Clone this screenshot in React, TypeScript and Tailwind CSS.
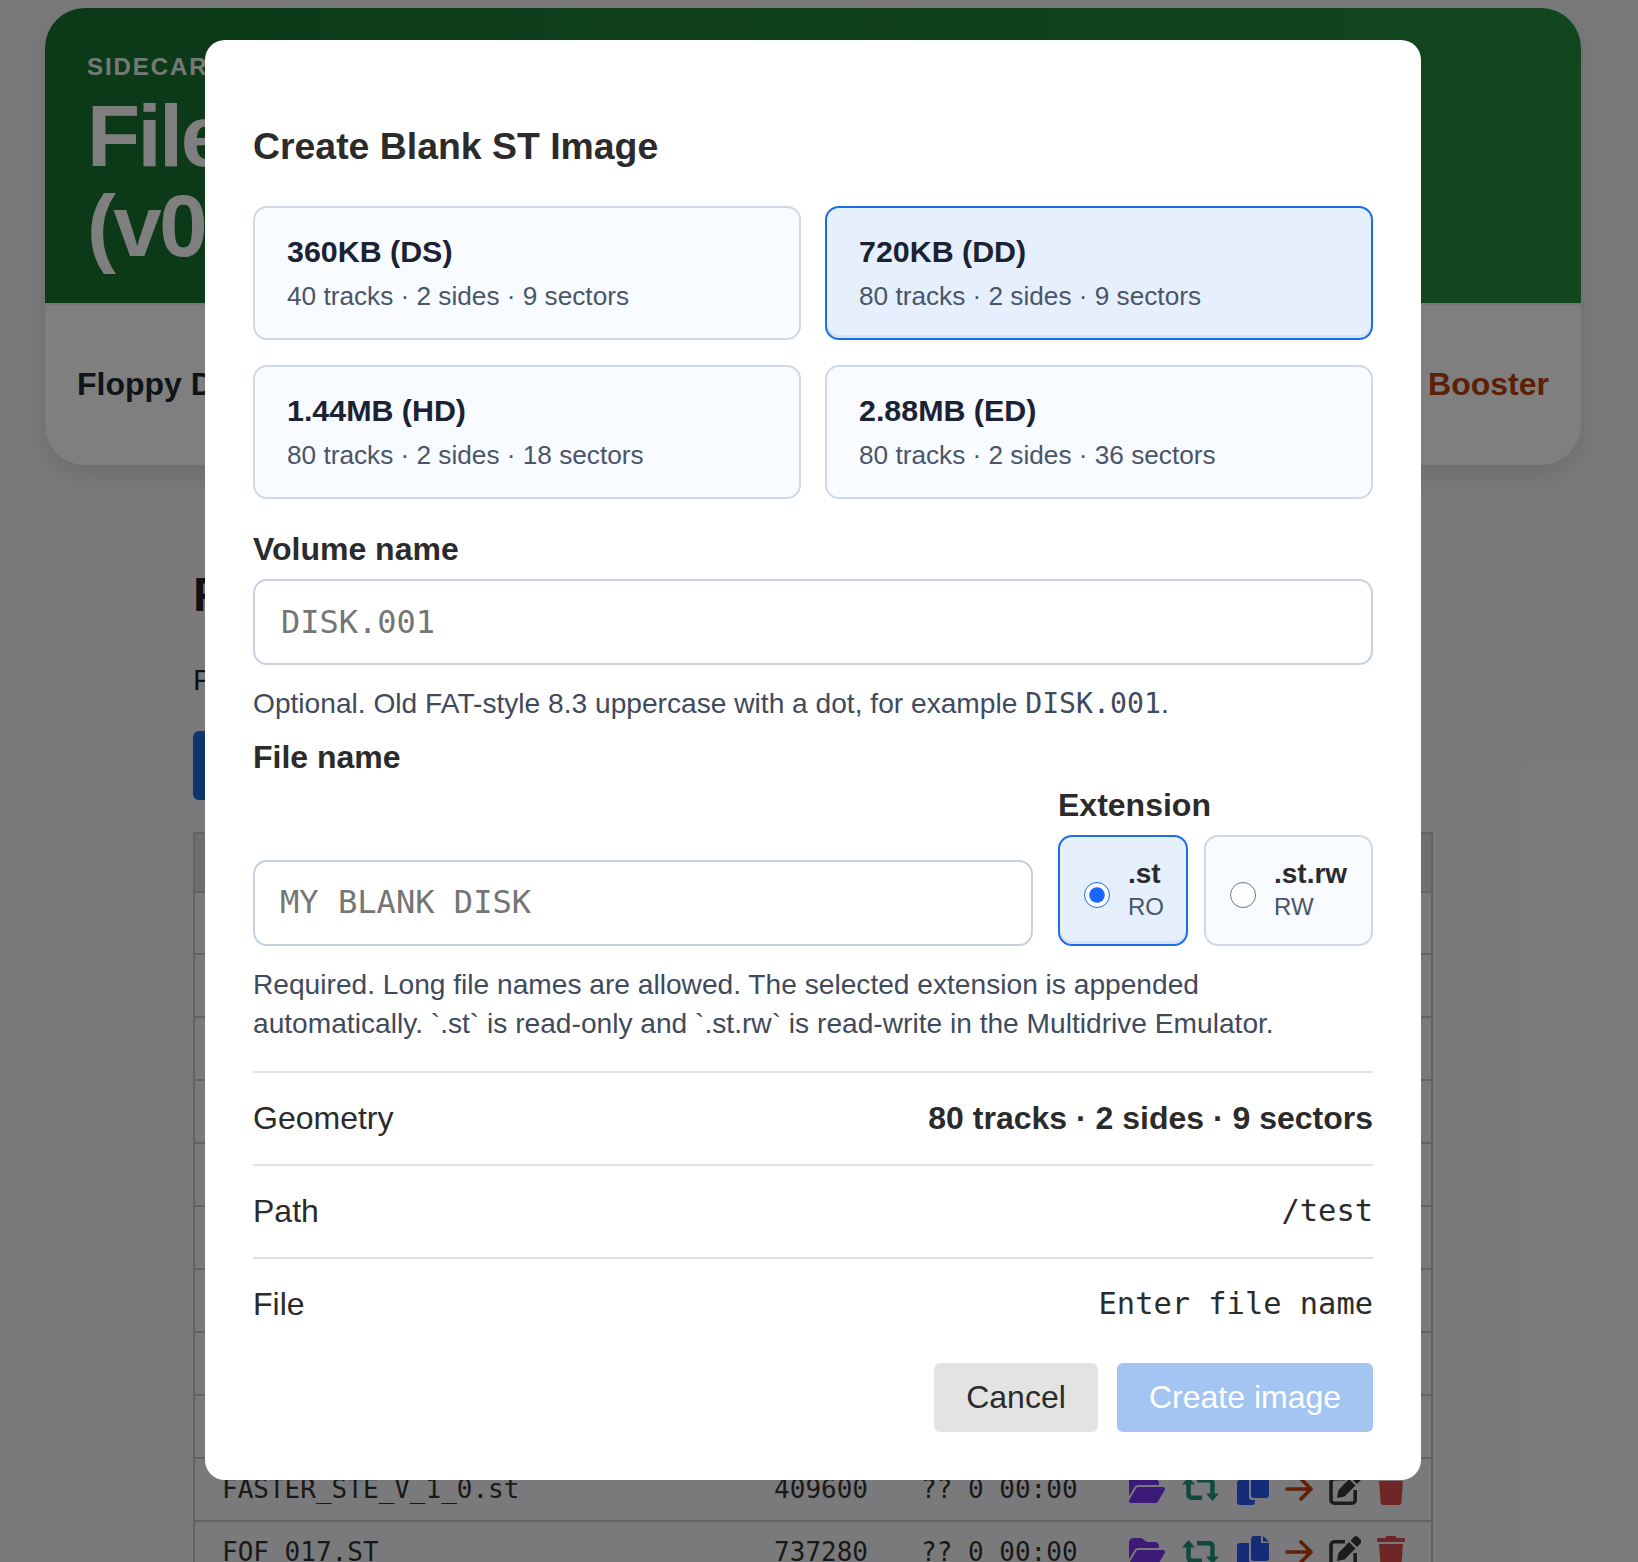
import React from 'react';
import { FaFolderOpen } from 'react-icons/fa6';

const SANS = "font-['Liberation_Sans',Arial,sans-serif]";
const MONO = "font-['DejaVu_Sans_Mono',monospace]";

const FORMATS = [
  { id: '360', title: '360KB (DS)', detail: '40 tracks · 2 sides · 9 sectors', selected: false },
  { id: '720', title: '720KB (DD)', detail: '80 tracks · 2 sides · 9 sectors', selected: true },
  { id: '144', title: '1.44MB (HD)', detail: '80 tracks · 2 sides · 18 sectors', selected: false },
  { id: '288', title: '2.88MB (ED)', detail: '80 tracks · 2 sides · 36 sectors', selected: false },
];

const FILES = [
  { name: '', size: '', date: '' },
  { name: '', size: '', date: '' },
  { name: '', size: '', date: '' },
  { name: '', size: '', date: '' },
  { name: '', size: '', date: '' },
  { name: '', size: '', date: '' },
  { name: '', size: '', date: '' },
  { name: '', size: '', date: '' },
  { name: '', size: '', date: '' },
  { name: 'FASTER_STE_V_1_0.st', size: '409600', date: '?? 0 00:00' },
  { name: 'FOF_017.ST', size: '737280', date: '?? 0 00:00' },
];

const RetweetIcon = () => (
  <svg viewBox="0 0 37 24" className="ml-[17px] h-[24px] w-[37px] text-[#1e947a]" fill="currentColor">
    <path d="M0 7.5 6.5 0 13 7.5H8.8V17a1.5 1.5 0 0 0 1.5 1.5H20V23H9a4.700 4.700 0 0 1-4.700-4.700V7.500Z" />
    <path d="M37 16.500 30.500 24 24 16.500h4.200V7a1.500 1.500 0 0 0-1.500-1.500H15V1h13a4.700 4.700 0 0 1 4.700 4.700v10.800Z" />
  </svg>
);

const CopyIcon = () => (
  <svg viewBox="0 0 32 32" className="ml-[18px] h-[32px] w-[32px] text-[#2a58f0]" fill="currentColor">
    <path d="M3 7h9v17a3 3 0 0 0 3 3h3v2a3 3 0 0 1-3 3H3a3 3 0 0 1-3-3V10a3 3 0 0 1 3-3Z" />
    <path d="M17 0h7v7h8v15a3 3 0 0 1-3 3H17a3 3 0 0 1-3-3V3a3 3 0 0 1 3-3Z" />
    <path d="M26 0l6 5.500h-6Z" />
  </svg>
);

const ArrowIcon = () => (
  <svg viewBox="0 0 28 24" className="ml-[16px] h-[24px] w-[28px] text-[#c2410c]" fill="none" stroke="currentColor" strokeWidth="3.6" strokeLinecap="round" strokeLinejoin="round">
    <path d="M2 12h24M16 2l10 10-10 10" />
  </svg>
);

const EditIcon = () => (
  <svg viewBox="0 0 32 32" className="ml-[16px] h-[32px] w-[32px] text-[#383838]" fill="currentColor">
    <path d="M16 5.800H5.500a3.500 3.500 0 0 0-3.500 3.500V27a3.200 3.200 0 0 0 3.200 3.200H23a3.200 3.200 0 0 0 3.200-3.200V17" fill="none" stroke="currentColor" strokeWidth="3.600" />
    <path d="M20 6l6.500 6.500-11 11L8 25l1.500-8Z" />
    <path d="M25 1a3 3 0 0 1 4 0l2.500 2.500a3 3 0 0 1 0 4L28 11l-6.500-6.500Z" />
  </svg>
);

const TrashIcon = () => (
  <svg viewBox="0 0 28 32" className="ml-[16px] h-[32px] w-[28px] text-[#dc4c4c]" fill="currentColor">
    <path d="M9.500 0h9l1 2H27a1 1 0 0 1 1 1v2a1 1 0 0 1-1 1H1a1 1 0 0 1-1-1V3a1 1 0 0 1 1-1h7.500Z" />
    <path d="M2 8h24l-1.500 21a3 3 0 0 1-3 3h-15a3 3 0 0 1-3-3Z" />
  </svg>
);

const FileRow: React.FC<{ name: string; size: string; date: string }> = ({ name, size, date }) => (
  <div className={`flex h-[62.95px] shrink-0 items-center border-t-2 border-[#c6c6c6] pl-[27px] text-[26px] text-[#333] ${MONO}`}>
    <span className="w-[520px]">{name}</span>
    <span className="w-[126px] text-right">{size}</span>
    <span className="ml-[53px] w-[208px]">{date}</span>
    {name && (
      <div className="flex items-center">
        <FaFolderOpen className="h-[32px] w-[36px] text-[#7634f0]" />
        <RetweetIcon />
        <CopyIcon />
        <ArrowIcon />
        <EditIcon />
        <TrashIcon />
      </div>
    )}
  </div>
);

const Page: React.FC = () => (
  <div className={`h-[1562px] overflow-hidden bg-[#f5f5f8] pt-[8px] ${SANS}`}>
    <div className="ml-[45px] w-[1536px] overflow-hidden rounded-[40px] bg-white shadow-[0_10px_30px_rgba(0,0,0,0.12)]">
      <div className="h-[295px] bg-gradient-to-r from-[#187330] to-[#238e3d] pl-[42px] pt-[47px] text-white">
        <div className="text-[24px] font-bold leading-[24px] tracking-[0.08em] text-[#eaf5ec]">SIDECART</div>
        <h1 className="mt-[12px] text-[87px] font-bold leading-[90px] tracking-[-0.03em]">
          File Browser
          <br />
          (v0.1.0)
        </h1>
      </div>
      <nav className="flex h-[162px] items-center justify-between border-t-2 border-[#ececec] px-[32px] pb-[2px] text-[32px] font-bold">
        <span className="text-[#1f2937]">Floppy Drives</span>
        <span className="text-[#b4420f]">Booster</span>
      </nav>
    </div>
    <main className="ml-[193px] w-[1240px]">
      <h2 className="mt-[102px] text-[48px] font-bold leading-[56px] text-[#222]">Files</h2>
      <p className="mt-[39px] text-[30px] leading-[36px] text-[#222]">Files on the card</p>
      <button className="mt-[33px] block h-[69px] w-[300px] rounded-[6px] bg-[#1a6ce0] text-[30px] text-white">
        Create
      </button>
      <div className="mt-[32px] border-x-2 border-t-2 border-[#c6c6c6]">
        <div className="h-[56.5px] bg-[#dcdcdc]" />
        {FILES.map((file, i) => (
          <FileRow key={i} {...file} />
        ))}
      </div>
    </main>
  </div>
);

const FormatCard: React.FC<{ title: string; detail: string; selected: boolean }> = ({ title, detail, selected }) => (
  <button
    type="button"
    className={`flex h-[134px] flex-col justify-center rounded-[14px] border-2 pl-[32px] pt-[1px] text-left ${
      selected
        ? 'border-[#1a6fe8] bg-[#e6f0fd] shadow-[inset_0_-3px_0_rgba(180,200,225,0.35)]'
        : 'border-[#d0d8e4] bg-[#f8fbff]'
    }`}
  >
    <span className="text-[30.4px] font-bold leading-[36px] text-[#1b2233]">{title}</span>
    <span className="mt-[9px] text-[26.2px] leading-[36px] text-[#4a5568]">{detail}</span>
  </button>
);

const ExtensionCard: React.FC<{ ext: string; mode: string; checked: boolean; className: string }> = ({
  ext,
  mode,
  checked,
  className,
}) => (
  <label
    className={`flex h-[111px] items-center rounded-[14px] border-2 pl-[24px] ${className} ${
      checked
        ? 'border-[#1a6fe8] bg-[#e6f0fd] shadow-[inset_0_-3px_0_rgba(180,200,225,0.35)]'
        : 'border-[#d0d8e4] bg-[#f8fbff]'
    }`}
  >
    <input
      type="radio"
      name="ext"
      defaultChecked={checked}
      className="m-0 mt-[9px] h-[26px] w-[26px] accent-[#1a66ff]"
    />
    <span className="ml-[18px] flex flex-col">
      <span className="text-[28px] font-bold leading-[34px] text-[#2b2b2b]">{ext}</span>
      <span className="text-[24px] leading-[32px] text-[#4a5568]">{mode}</span>
    </span>
  </label>
);

const SummaryRow: React.FC<{ label: string; children: React.ReactNode }> = ({ label, children }) => (
  <div className="flex h-[93px] items-center justify-between border-t-2 border-[#e2e2e2] text-[32px] text-[#2b2b2b]">
    <span>{label}</span>
    {children}
  </div>
);

const Modal: React.FC = () => (
  <div className={`absolute inset-0 bg-black/50 ${SANS}`}>
    <div className="ml-[205px] mt-[40px] flex h-[1440px] w-[1216px] flex-col rounded-[20px] bg-white p-[48px]">
      <h2 className="mt-[36px] mb-[38px] text-[37.4px] font-bold leading-[44px] text-[#2b2b2b]">Create Blank ST Image</h2>

      <div className="grid grid-cols-2 gap-x-[24px] gap-y-[25px]">
        {FORMATS.map((f) => (
          <FormatCard key={f.id} title={f.title} detail={f.detail} selected={f.selected} />
        ))}
      </div>

      <label className="mt-[32px] text-[32px] font-bold leading-[36px] text-[#2b2b2b]">Volume name</label>
      <input
        placeholder="DISK.001"
        className={`mt-[12px] h-[86px] shrink-0 rounded-[14px] border-2 border-[#c5d1e0] px-[26px] text-[32px] outline-none placeholder:text-[#757575] ${MONO}`}
      />
      <p className="mt-[20px] text-[28.15px] leading-[38.6px] text-[#3f4a5c]">
        Optional. Old FAT-style 8.3 uppercase with a dot, for example <code className={`text-[28.2px] ${MONO}`}>DISK.001</code>.
      </p>

      <label className="mt-[15px] text-[32px] font-bold leading-[36px] text-[#2b2b2b]">File name</label>
      <div className="mt-[12px] flex items-end gap-[25px]">
        <input
          placeholder="MY BLANK DISK"
          className={`h-[86px] w-[780px] rounded-[14px] border-2 border-[#c5d1e0] px-[25px] pb-[2px] text-[32.1px] outline-none placeholder:text-[#757575] ${MONO}`}
        />
        <div className="flex-1">
          <div className="mb-[12px] text-[32px] font-bold leading-[36px] text-[#2b2b2b]">Extension</div>
          <div className="flex gap-[16px]">
            <ExtensionCard ext=".st" mode="RO" checked className="w-[130px]" />
            <ExtensionCard ext=".st.rw" mode="RW" checked={false} className="w-[169px]" />
          </div>
        </div>
      </div>
      <p className="mt-[19px] mb-[28px] max-w-[1040px] text-[28.15px] leading-[39px] text-[#3f4a5c]">
        Required. Long file names are allowed. The selected extension is appended automatically. `.st` is read-only and
        `.st.rw` is read-write in the Multidrive Emulator.
      </p>

      <SummaryRow label="Geometry">
        <span className="font-bold">80 tracks · 2 sides · 9 sectors</span>
      </SummaryRow>
      <SummaryRow label="Path">
        <span className={`text-[30.4px] ${MONO}`}>/test</span>
      </SummaryRow>
      <SummaryRow label="File">
        <span className={`text-[30.4px] ${MONO}`}>Enter file name</span>
      </SummaryRow>

      <div className="mt-auto flex justify-end gap-[19px]">
        <button type="button" className="h-[69px] w-[164px] rounded-[6px] bg-[#e3e3e3] pb-[2px] text-[32px] text-[#2b2b2b]">
          Cancel
        </button>
        <button type="button" className="h-[69px] w-[256px] rounded-[6px] bg-[#a4c5f2] pb-[2px] text-[32px] text-white">
          Create image
        </button>
      </div>
    </div>
  </div>
);

export default function App() {
  return (
    <div className="relative h-[1562px] overflow-hidden">
      <Page />
      <Modal />
    </div>
  );
}
